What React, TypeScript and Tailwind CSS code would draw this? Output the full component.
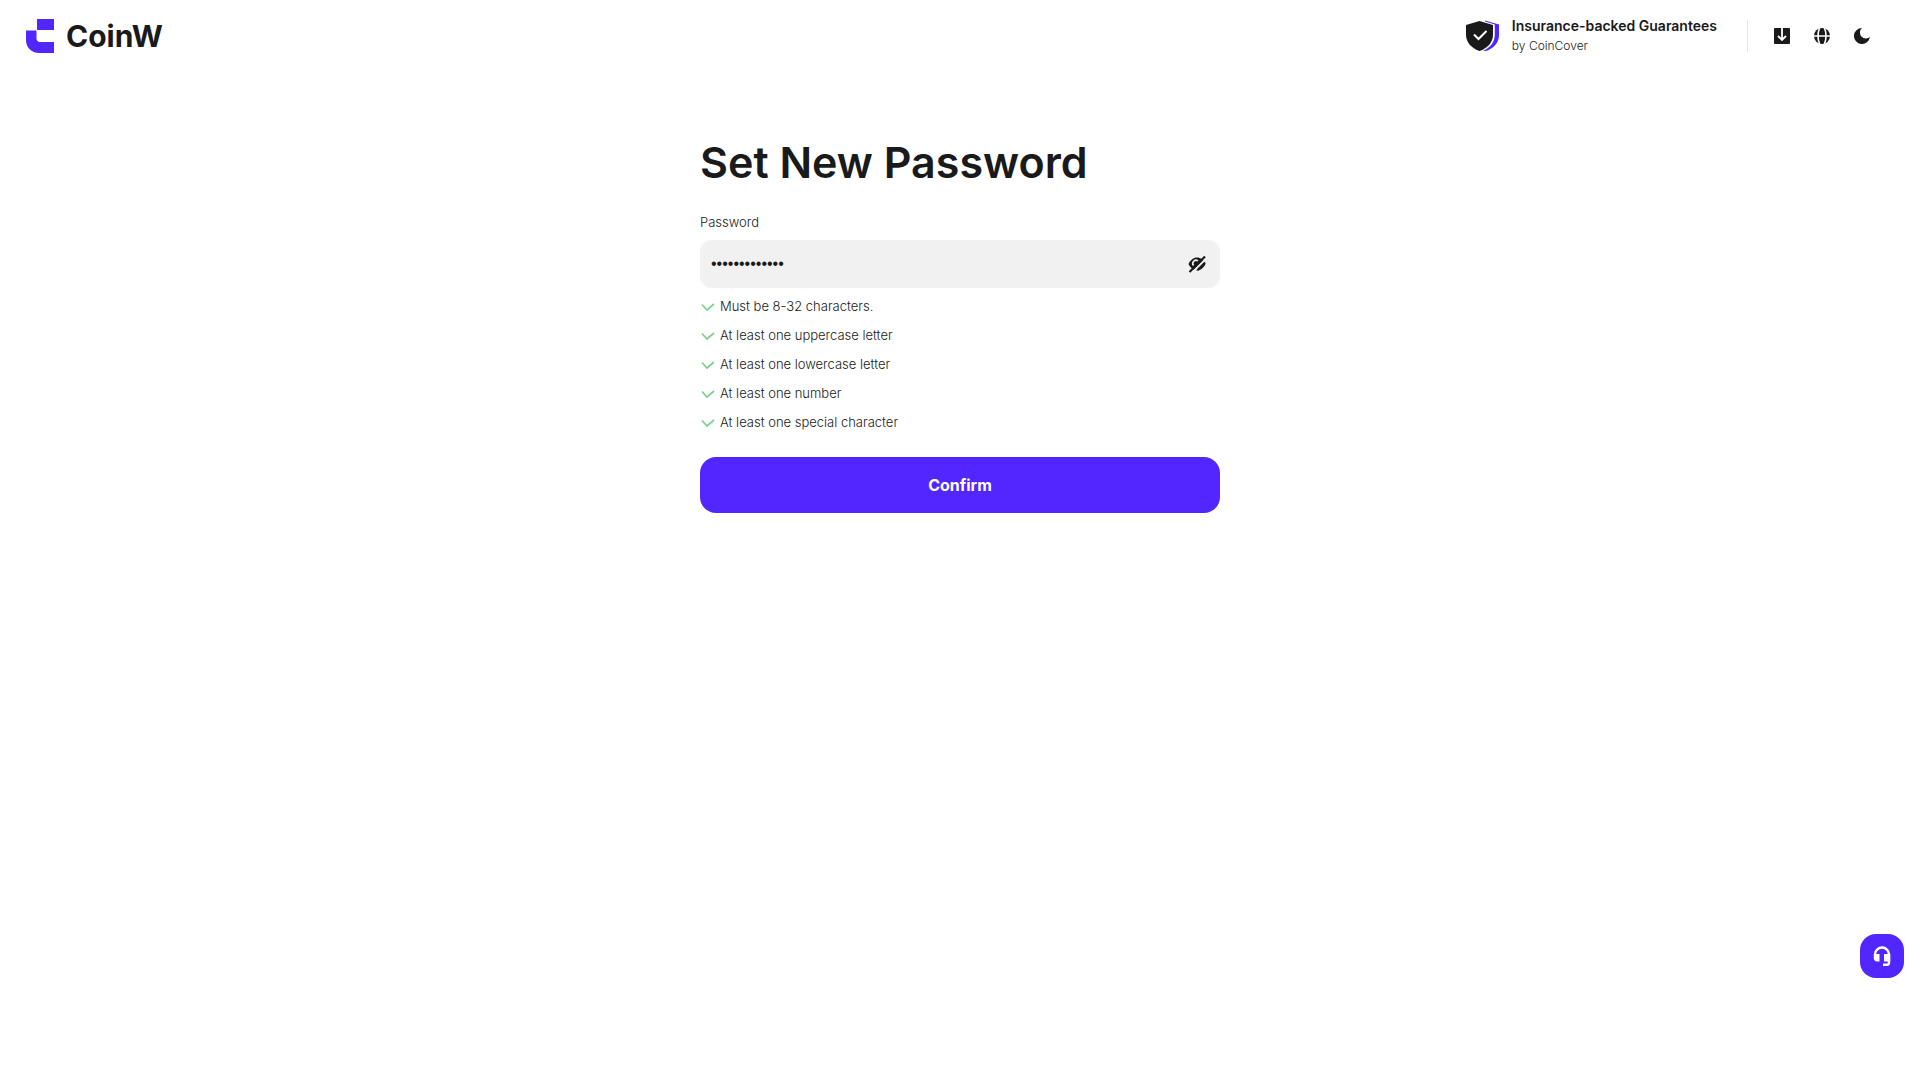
import { useState } from "react";

const rules = [
  "Must be 8-32 characters.",
  "At least one uppercase letter",
  "At least one lowercase letter",
  "At least one number",
  "At least one special character",
];

function Logo() {
  return (
    <svg width="28" height="34" viewBox="0 0 28 34" fill="#5227FF" aria-hidden="true">
      <path d="M11 0H28V11H11Z" />
      <path d="M0 11.5H10.5V19.5C10.5 21.5 12 23 14 23H28V34H13C5.5 34 0 28.5 0 21Z" />
    </svg>
  );
}

function Shield() {
  return (
    <svg width="34" height="32" viewBox="0 0 34 32" aria-hidden="true">
      <path d="M19 0.5L33 4.5V15C33 23 27.5 28.5 20 31H17C25 27 28.8 22 28.8 14V4.5L19 1.5Z" fill="#5227FF" />
      <path
        d="M13.5 1L27 5V15C27 22.5 21 28.5 13.5 31C6 28.5 0 22.5 0 15V5Z"
        fill="#1a1a1a"
      />
      <path d="M8 14.5L12.5 19L20.5 11" fill="none" stroke="#fff" strokeWidth="2" />
    </svg>
  );
}

function DownloadIcon() {
  return (
    <svg width="16" height="16" viewBox="0 0 16 16" aria-hidden="true">
      <rect width="16" height="16" rx="1" fill="#1a1a1a" />
      <path d="M8 0V12M4 8L8 12L12 8" fill="none" stroke="#fff" strokeWidth="1.8" />
    </svg>
  );
}

function GlobeIcon() {
  return (
    <svg width="16" height="16" viewBox="0 0 16 16" aria-hidden="true">
      <circle cx="8" cy="8" r="8" fill="#1a1a1a" />
      <path
        d="M5.6 0C3.5 4.5 3.5 11.5 5.6 16M10.4 0C12.5 4.5 12.5 11.5 10.4 16M0 8H16"
        fill="none"
        stroke="#fff"
        strokeWidth="1.6"
      />
    </svg>
  );
}

function MoonIcon() {
  return (
    <svg width="16" height="16" viewBox="0 0 16 16" fill="#1a1a1a" aria-hidden="true">
      <path d="M8 0A5.6 5.6 0 0 0 15.9 9A8 8 0 1 1 8 0Z" />
    </svg>
  );
}

function EyeOffIcon() {
  return (
    <svg width="18" height="18" viewBox="0 0 18 18" aria-hidden="true">
      <path
        d="M0.5 9C2.5 5 5.5 2.5 9 2.5C12.5 2.5 15.5 5 17.5 9C15.5 13 12.5 15.5 9 15.5C5.5 15.5 2.5 13 0.5 9Z"
        fill="#1a1a1a"
      />
      <path d="M5.5 10.5A3.2 3.2 0 0 1 10 6" fill="none" stroke="#f1f1f1" strokeWidth="1.6" />
      <path d="M3.5 18.5L18.5 3.5" stroke="#f1f1f1" strokeWidth="2.4" />
      <path d="M1.5 17L17 1.5" stroke="#1a1a1a" strokeWidth="2.2" />
      <path d="M9.5 15L17 7.5" stroke="#1a1a1a" strokeWidth="2" />
    </svg>
  );
}

function CheckIcon() {
  return (
    <svg width="14" height="10" viewBox="0 0 14 10" fill="none" aria-hidden="true">
      <path d="M1 2.5L6 8L13 2" stroke="#7fd08f" strokeWidth="1.7" />
    </svg>
  );
}

function HeadsetIcon() {
  return (
    <svg width="18" height="20" viewBox="0 0 18 20" fill="none" aria-hidden="true">
      <path
        d="M2 9V8.5A7 7 0 0 1 16 8.5V16.5C16 18 15.5 18.8 14 18.8H10"
        stroke="#fff"
        strokeWidth="2.4"
      />
      <path d="M0.8 8H6.5V15.5H4C2 15.5 0.8 14 0.8 12.5ZM11 8H17.2V15.5H11Z" fill="#fff" />
    </svg>
  );
}

export default function App() {
  const [password, setPassword] = useState("Abcdefgh1234!");
  const [visible, setVisible] = useState(false);

  return (
    <div className="min-h-screen bg-white font-['Inter',sans-serif] text-[#1a1a1a]">
      <header className="flex h-18 items-center justify-between pr-[50px] pl-[26px]">
        <a href="#" className="flex items-center gap-3">
          <Logo />
          <span className="text-3xl leading-8 font-bold">CoinW</span>
        </a>

        <div className="flex items-center">
          <a href="#" className="flex items-center gap-3">
            <Shield />
            <span className="flex flex-col">
              <span className="text-sm leading-5 font-semibold">Insurance-backed Guarantees</span>
              <span className="text-xs leading-5 font-light">by CoinCover</span>
            </span>
          </a>
          <div className="mr-[26px] ml-[30px] h-8 w-px bg-[#e5e5e5]" />
          <div className="flex gap-6">
            <button type="button" aria-label="Download">
              <DownloadIcon />
            </button>
            <button type="button" aria-label="Language">
              <GlobeIcon />
            </button>
            <button type="button" aria-label="Theme">
              <MoonIcon />
            </button>
          </div>
        </div>
      </header>

      <main className="mx-auto w-full max-w-[520px] pt-[60px]">
        <h1 className="text-[43px] leading-[60px] font-semibold">Set New Password</h1>
        <form onSubmit={(e) => e.preventDefault()}>
          <label htmlFor="password" className="mt-5 block text-[13px] leading-5 font-light">
            Password
          </label>
          <div className="mt-2 flex h-12 items-center rounded-xl bg-[#f1f1f1] pr-3.5 pl-[11px]">
            <input
              id="password"
              type={visible ? "text" : "password"}
              value={password}
              onChange={(e) => setPassword(e.target.value)}
              className="min-w-0 flex-1 bg-transparent font-['Liberation_Sans',sans-serif] text-base outline-none"
            />
            <button type="button" aria-label="Show password" onClick={() => setVisible(!visible)}>
              <EyeOffIcon />
            </button>
          </div>

          <ul className="mt-1 text-[13px] leading-[29px] font-light">
            {rules.map((rule) => (
              <li key={rule} className="flex items-center gap-[5px] pl-px">
                <CheckIcon />
                {rule}
              </li>
            ))}
          </ul>

          <button
            type="submit"
            className="mt-5 h-14 w-full rounded-2xl bg-[#5227ff] text-base font-bold text-white"
          >
            Confirm
          </button>
        </form>
      </main>

      <button
        type="button"
        aria-label="Support"
        className="fixed right-4 bottom-[102px] flex size-11 items-center justify-center rounded-2xl bg-[#5227ff]"
      >
        <HeadsetIcon />
      </button>
    </div>
  );
}
